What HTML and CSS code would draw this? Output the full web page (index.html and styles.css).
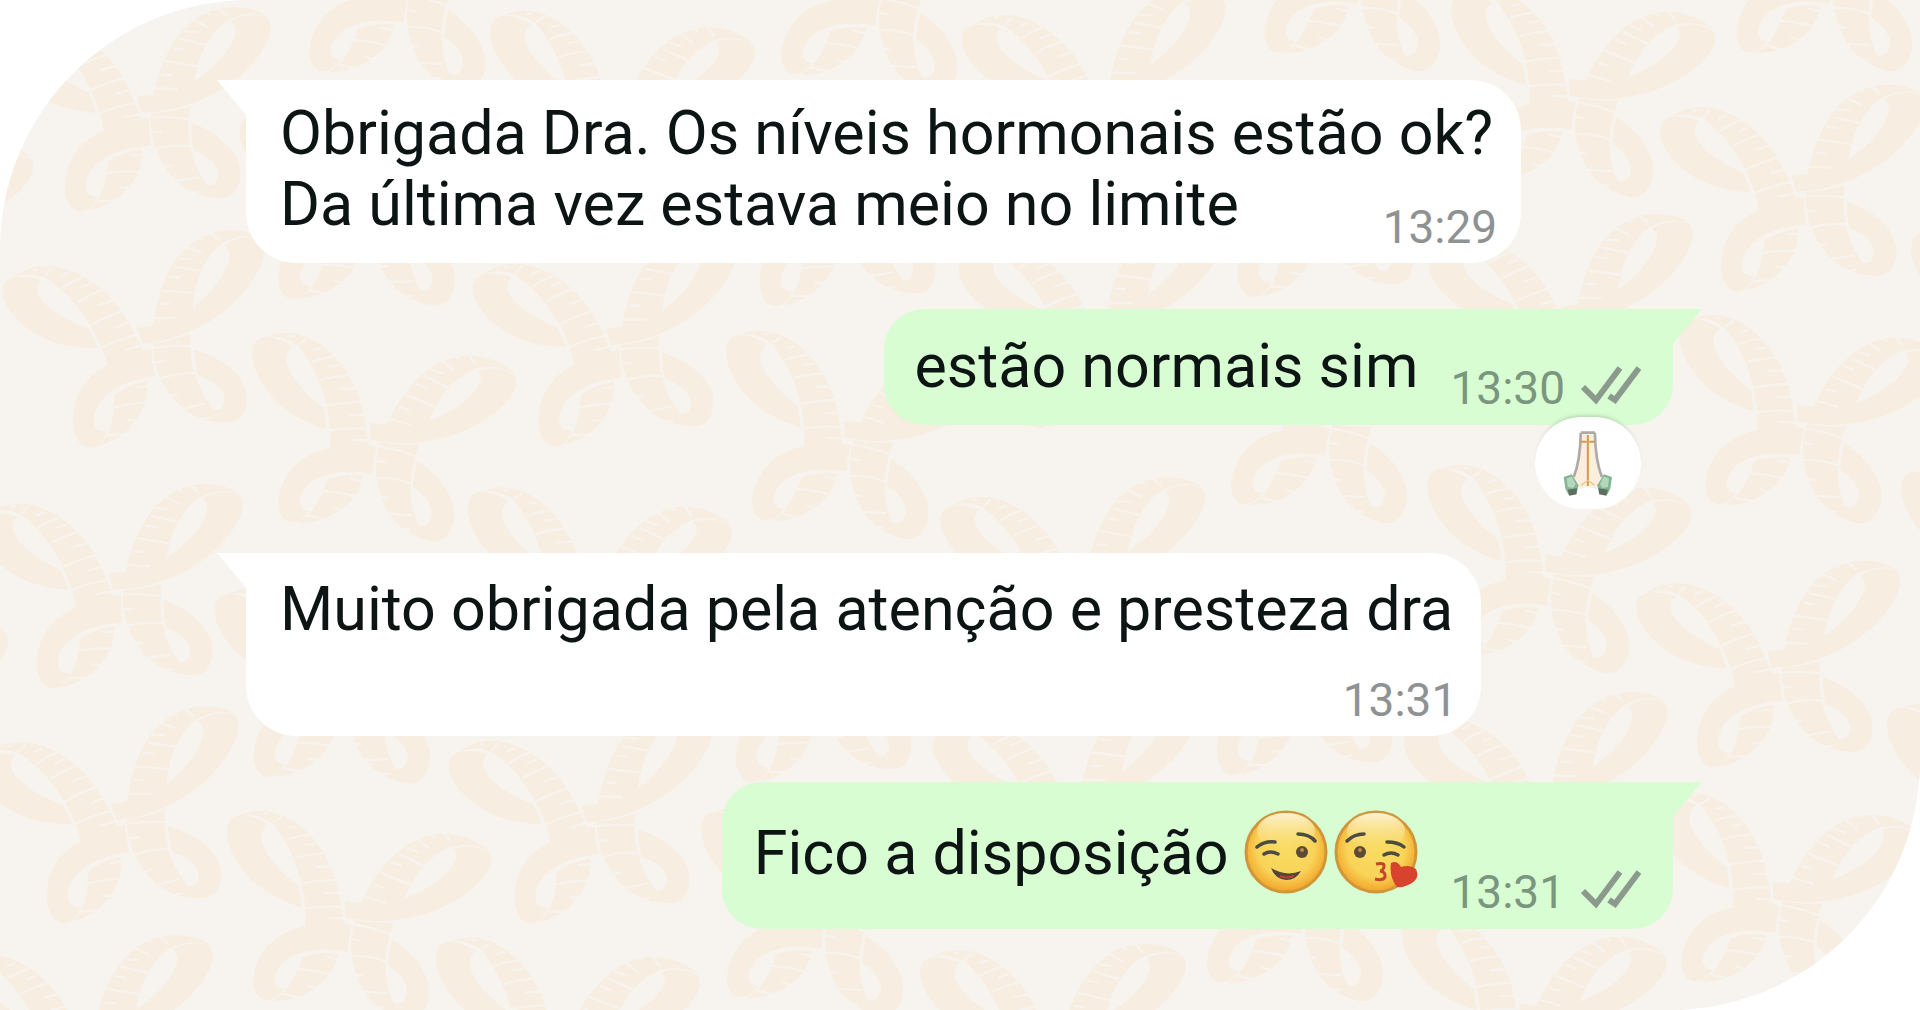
FILE: index.html
```html
<!DOCTYPE html>
<html lang="pt-BR">
<head>
<meta charset="utf-8">
<meta name="viewport" content="width=device-width, initial-scale=1">
<title>Conversa</title>
<link rel="stylesheet" href="styles.css">
</head>
<body>
<main class="chat">
  <svg class="wallpaper" viewBox="0 0 1920 1010" preserveAspectRatio="xMidYMid slice" aria-hidden="true">
    <defs>
      <g id="tape" transform="scale(.3333) translate(-435 -300)">
        <g class="tape-body">
          <path d="M45 92C20 98 5 110 5 135C5 185 70 250 150 280C200 297 250 300 293 299Q282 270 266 242C210 225 108 175 108 125Q108 107 118 97C95 91 65 90 45 92Z"/>
          <path d="M35 94C65 65 110 56 150 57C250 65 330 140 365 190C392 232 410 262 428 303L453 299Q456 345 467 380C360 395 285 450 285 515C285 545 305 552 324 547C315 580 300 595 275 598C245 598 222 560 222 515C222 450 250 390 322 350C312 310 297 275 272 235C240 180 190 125 130 89Q80 72 35 94Z"/>
          <path d="M345 440Q385 408 443 395C448 440 438 480 410 515C380 560 340 580 303 592C328 565 347 525 345 440Z"/>
          <path d="M459 228C470 120 520 -62 698 -60Q750 -58 778 -38C740 -52 700 -45 655 -17C605 30 582 90 576 176C640 120 684 60 684 10Q680 -6 667 -15C700 -40 745 -48 775 -36C794 -20 796 20 759 80C700 180 580 265 428 285L410 238Z"/>
          <path d="M458 283Q520 275 570 252C572 300 573 340 590 385C605 430 640 485 688 515C600 520 545 480 510 430C470 380 461 330 458 283Z"/>
          <path d="M582 300C680 325 744 385 744 445C744 490 720 515 690 515Q660 505 643 479C665 484 678 470 677 445C675 415 640 390 597 380Q584 340 582 300Z"/>
        </g>
        <g class="tape-marks">
          <path d="M130 87L150 62M184 124Q210 100 244 87M227 166Q260 142 304 124M268 234Q310 208 366 187M302 301Q350 272 410 258M95 70L112 66M176 88L200 74M238 120L270 104M294 170L338 154M345 237L388 220M376 304L430 288"/>
          <path d="M268 240L303 303M550 -10L600 8M518 52L598 62M482 123L580 129M461 207L530 204M580 -38L604 -30M620 -55L655 -30M530 28L570 27M502 82L538 84M478 164L510 163"/>
          <path d="M460 296Q520 286 578 289M478 390Q530 368 590 370M545 480L620 459M466 340L496 335M505 441L535 433M608 507L630 502M343 477Q390 464 442 461M408 415L446 411M386 514L420 513M325 562L378 556"/>
        </g>
      </g>
    </defs>
    <use href="#tape" transform="translate(143 118) rotate(6)"/>
    <use href="#tape" transform="translate(145 349) rotate(1)"/>
    <use href="#tape" transform="translate(115 595) rotate(6)"/>
    <use href="#tape" transform="translate(119 825) rotate(1)"/>
    <use href="#tape" transform="translate(85 1046) rotate(6)"/>
    <use href="#tape" transform="translate(-112 230) rotate(19)"/>
    <use href="#tape" transform="translate(-137 705) rotate(19)"/>
    <use href="#tape" transform="translate(402 -6) rotate(19)"/>
    <use href="#tape" transform="translate(366 215) rotate(14)"/>
    <use href="#tape" transform="translate(371 445) rotate(19)"/>
    <use href="#tape" transform="translate(341 693) rotate(14)"/>
    <use href="#tape" transform="translate(346 923) rotate(19)"/>
    <use href="#tape" transform="translate(612 120) rotate(17)"/>
    <use href="#tape" transform="translate(613 350) rotate(3)"/>
    <use href="#tape" transform="translate(588 598) rotate(18)"/>
    <use href="#tape" transform="translate(589 827) rotate(3)"/>
    <use href="#tape" transform="translate(556 1048) rotate(18)"/>
    <use href="#tape" transform="translate(874 -3) rotate(19)"/>
    <use href="#tape" transform="translate(838 213) rotate(6)"/>
    <use href="#tape" transform="translate(845 443) rotate(19)"/>
    <use href="#tape" transform="translate(814 689) rotate(6)"/>
    <use href="#tape" transform="translate(820 920) rotate(19)"/>
    <use href="#tape" transform="translate(1101 103) rotate(4)"/>
    <use href="#tape" transform="translate(1098 333) rotate(4)"/>
    <use href="#tape" transform="translate(1077 588) rotate(6)"/>
    <use href="#tape" transform="translate(1072 810) rotate(4)"/>
    <use href="#tape" transform="translate(1052 1048) rotate(10)"/>
    <use href="#tape" transform="translate(1357 -25) rotate(19)"/>
    <use href="#tape" transform="translate(1316 204) rotate(6)"/>
    <use href="#tape" transform="translate(1324 427) rotate(19)"/>
    <use href="#tape" transform="translate(1295 682) rotate(6)"/>
    <use href="#tape" transform="translate(1300 905) rotate(19)"/>
    <use href="#tape" transform="translate(1570 101) rotate(19)"/>
    <use href="#tape" transform="translate(1568 328) rotate(4)"/>
    <use href="#tape" transform="translate(1546 577) rotate(19)"/>
    <use href="#tape" transform="translate(1543 806) rotate(4)"/>
    <use href="#tape" transform="translate(1521 1026) rotate(19)"/>
    <use href="#tape" transform="translate(1829 -25) rotate(19)"/>
    <use href="#tape" transform="translate(1798 197) rotate(5)"/>
    <use href="#tape" transform="translate(1798 427) rotate(19)"/>
    <use href="#tape" transform="translate(1774 673) rotate(5)"/>
    <use href="#tape" transform="translate(1774 904) rotate(19)"/>
    <use href="#tape" transform="translate(2030 340) rotate(19)"/>
    <use href="#tape" transform="translate(2020 580) rotate(19)"/>
    <use href="#tape" transform="translate(2006 816) rotate(19)"/>
  </svg>

  <article class="bubble received">
    <p class="text">Obrigada Dra. Os níveis hormonais estão ok?<br>Da última vez estava meio no limite</p>
    <time class="time">13:29</time>
  </article>

  <article class="bubble sent reacted">
    <p class="text">estão normais sim</p>
    <div class="meta">
      <time class="time">13:30</time>
      <svg class="ticks" viewBox="0 0 60 40" role="img" aria-label="Entregue"><path d="M2 22L15 35L39 3M28 31L34 35L58 3"/></svg>
    </div>
    <span class="reaction">
      <svg class="hands" viewBox="395 395 155 200" role="img" aria-label="Mãos em oração">
        <path d="M450 403L471 403L472 562L447 572L430 535C442 505 450 455 450 403Z" fill="#fbeedd"/>
        <path d="M494 403L473 403L472 562L497 572L514 535C502 505 494 455 494 403Z" fill="#fbeedd"/>
        <path d="M451 403H493M451 403C450 455 442 505 430 535M493 403C494 455 502 505 514 535" fill="none" stroke="#aeaaa6" stroke-width="8"/>
        <path d="M472 410V562M452 430H468M476 430H492" fill="none" stroke="#d39a4c" stroke-width="6"/>
        <path d="M452 560L472 545L492 560" fill="none" stroke="#efc47a" stroke-width="4"/>
        <path d="M400 535L424 527L444 560L438 586L415 590L405 570Z" fill="#84b592"/>
        <path d="M544 535L520 527L500 560L506 586L529 590L539 570Z" fill="#84b592"/>
        <path d="M409 540L424 534L436 557L428 568L412 565ZM535 540L520 534L508 557L516 568L532 565Z" fill="#b5d8bd"/>
        <path d="M412 573L440 569L438 587L417 591ZM532 573L504 569L506 587L527 591Z" fill="#5d6f61"/>
      </svg>
    </span>
  </article>

  <article class="bubble received short">
    <p class="text">Muito obrigada pela atenção e presteza dra</p>
    <time class="time">13:31</time>
  </article>

  <article class="bubble sent tall">
    <p class="text">Fico a disposição</p>
    <div class="emojis">
      <svg class="emoji" viewBox="0 0 84 84" role="img" aria-label="Piscadela">
        <defs>
          <radialGradient id="face" cx=".5" cy=".45" r=".55">
            <stop offset="0" stop-color="#f9dc62"/><stop offset=".65" stop-color="#f8d459"/><stop offset="1" stop-color="#f2a428"/>
          </radialGradient>
          <linearGradient id="shine" x2="0" y2="1">
            <stop offset="0" stop-color="#fdf3d2"/><stop offset="1" stop-color="#fbe79c" stop-opacity="0"/>
          </linearGradient>
        </defs>
        <circle cx="42" cy="42" r="40" fill="url(#face)" stroke="#cf963a" stroke-width="3"/>
        <ellipse cx="42" cy="21" rx="29" ry="18" fill="url(#shine)"/>
        <g fill="none" stroke="#4d4c43" stroke-width="3.5" stroke-linecap="round">
          <path d="M13 37Q20 31 31 32M54 24Q65 24 71 31"/><path d="M20 44Q26 40 34 44"/>
        </g>
        <circle cx="58" cy="42" r="6" fill="#5a4b38"/><circle cx="58" cy="40" r="2" fill="#c08a3c"/>
        <path d="M27 58Q42 67 57 61Q52 70 42 70Q31 69 27 58Z" fill="#55423a"/>
        <path d="M36 66Q42 69 50 66" fill="none" stroke="#b4442f" stroke-width="2"/>
      </svg>
      <svg class="emoji" viewBox="0 0 84 84" role="img" aria-label="Mandando beijo">
        <circle cx="42" cy="42" r="40" fill="url(#face)" stroke="#cf963a" stroke-width="3"/>
        <ellipse cx="42" cy="21" rx="29" ry="18" fill="url(#shine)"/>
        <g fill="none" stroke="#4d4c43" stroke-width="3.5" stroke-linecap="round">
          <path d="M13 31Q20 24 30 24M53 32Q64 32 70 37"/><path d="M50 45Q57 41 64 45"/>
        </g>
        <circle cx="26" cy="42" r="6" fill="#5a4b38"/><circle cx="26" cy="40" r="2" fill="#c08a3c"/>
        <path d="M42 54Q51 52 50 57Q49 61 46 61Q52 62 51 67Q49 71 41 69" fill="none" stroke="#c2452c" stroke-width="3"/>
        <path d="M57 53Q63 50 67 57Q76 54 82 59Q86 68 78 73Q70 78 63 77Q55 67 57 53Z" fill="#d7432c"/>
      </svg>
    </div>
    <div class="meta">
      <time class="time">13:31</time>
      <svg class="ticks" viewBox="0 0 60 40" role="img" aria-label="Entregue"><path d="M2 22L15 35L39 3M28 31L34 35L58 3"/></svg>
    </div>
  </article>
</main>
</body>
</html>
```
FILE: styles.css
```css
* { box-sizing: border-box; }

body {
  margin: 0;
  background: #fff;
  color: #0d1414;
  font-family: Roboto, "Liberation Sans", sans-serif;
  font-size: 61px;
  line-height: 71px;
}

.chat {
  position: relative;
  isolation: isolate;
  display: flex;
  flex-direction: column;
  align-items: flex-start;
  gap: 46px;
  min-height: 100vh;
  padding: 80px 247px 80px 246px;
  overflow: hidden;
  background: #f7f3ee;
  border-radius: 250px 0;
}

.wallpaper {
  position: absolute;
  inset: 0;
  z-index: -1;
  width: 100%;
  height: 100%;
}

.tape-body { fill: #f7ede0; }
.tape-marks { fill: none; stroke: #f7f3ee; stroke-width: 7; }

.bubble { position: relative; }

.bubble::before {
  content: "";
  position: absolute;
  top: 0;
  width: 30px;
  height: 36px;
  background: inherit;
}

.text { margin: 0 0 13px; }

.time {
  font-size: 46px;
  line-height: 54px;
  color: #8e9292;
}

.received {
  display: grid;
  padding: 18px 28px 9px 34px;
  background: #fff;
  border-radius: 0 50px 50px 50px;
}

.received .text { margin-bottom: 14px; }

.received::before {
  left: -29px;
  clip-path: polygon(0 0, 100% 0, 100% 100%);
}

.received .text,
.received .time { grid-area: 1 / 1; }

.received .time {
  place-self: end;
  margin-right: -4px;
}

.short { padding-top: 21px; }

.short .time {
  grid-area: 2 / 1;
  margin-top: 14px;
}

.sent {
  display: flex;
  align-items: flex-end;
  align-self: flex-end;
  padding: 22px 32px 10px;
  background: #d8fdd2;
  border-radius: 40px 0 40px 40px;
}

.sent::before {
  right: -29px;
  clip-path: polygon(0 0, 100% 0, 0 100%);
}

.sent .time { color: #7b967e; }

.meta {
  display: flex;
  align-items: flex-start;
  gap: 16px;
  margin-left: 32px;
}

.ticks {
  width: 60px;
  height: 40px;
  margin-top: 4px;
  fill: none;
  stroke: #8c9a8d;
  stroke-width: 6;
}

.reacted {
  margin-bottom: 82px;
  padding-left: 30px;
}

.reaction {
  position: absolute;
  right: 32px;
  bottom: -84px;
  display: flex;
  align-items: center;
  justify-content: center;
  width: 106px;
  height: 92px;
  background: #fff;
  border-radius: 46px;
  box-shadow: 0 -4px 4px -3px #0003;
}

.hands { width: 52px; height: 67px; }

.tall { padding-top: 28px; }
.tall .text { margin-bottom: 30px; }

.emojis {
  display: flex;
  gap: 6px;
  margin: 0 0 25px 16px;
}

.emoji { width: 84px; height: 84px; }
```
